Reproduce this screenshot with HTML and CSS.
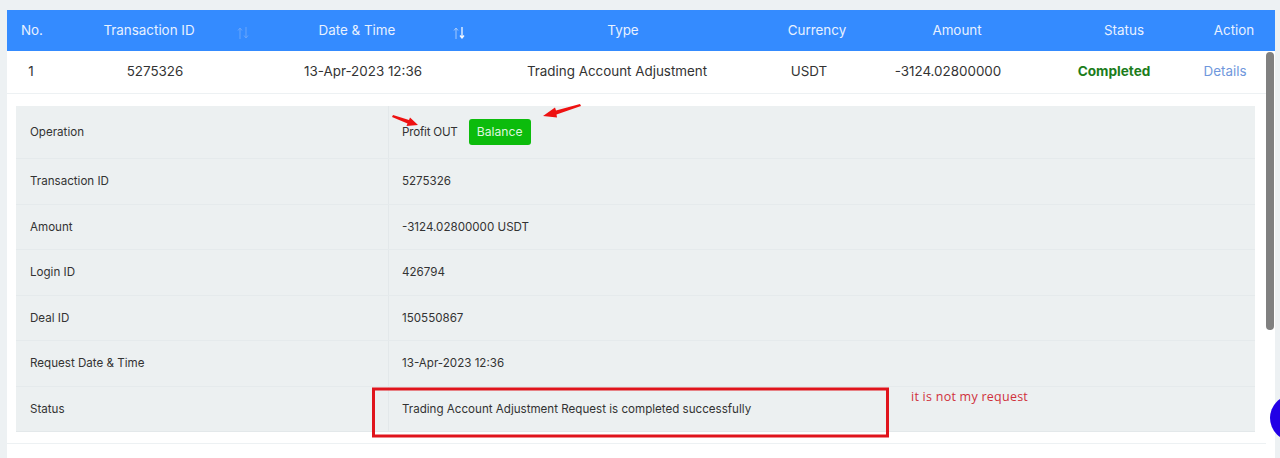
FILE: index.html
```html
<!DOCTYPE html>
<html lang="en">
<head>
<meta charset="utf-8">
<title>Transactions</title>
<link rel="stylesheet" href="styles.css">
</head>
<body>
<main class="card">
  <div class="head">
    <div class="no-left">No.</div>
    <div>Transaction ID</div>
    <div>Date &amp; Time</div>
    <div>Type</div>
    <div>Currency</div>
    <div>Amount</div>
    <div>Status</div>
    <div>Action</div>
    <svg class="sort sort-a" viewBox="0 0 12 12" width="12" height="12" aria-hidden="true">
      <path d="M3 12V1M1 3.5L3 1l2 2.5" class="dim"/>
      <path d="M9 0v11M7 8.5L9 11l2-2.5" class="dim"/>
    </svg>
    <svg class="sort sort-b" viewBox="0 0 12 12" width="12" height="12" aria-hidden="true">
      <path d="M3 12V1M1 3.5L3 1l2 2.5" class="mid"/>
      <path d="M9 0v11M7 8.5L9 11l2-2.5" class="lit"/>
    </svg>
  </div>
  <div class="row">
    <div>1</div>
    <div>5275326</div>
    <div>13-Apr-2023 12:36</div>
    <div>Trading Account Adjustment</div>
    <div>USDT</div>
    <div>-3124.02800000</div>
    <div class="done">Completed</div>
    <div class="link">Details</div>
  </div>
  <div class="wrap">
    <div class="details">
      <div class="item h53"><div class="k">Operation</div><div class="v"><span class="op">Profit OUT</span><span class="badge">Balance</span></div></div>
      <div class="item"><div class="k">Transaction ID</div><div class="v">5275326</div></div>
      <div class="item"><div class="k">Amount</div><div class="v">-3124.02800000 USDT</div></div>
      <div class="item"><div class="k">Login ID</div><div class="v">426794</div></div>
      <div class="item"><div class="k">Deal ID</div><div class="v">150550867</div></div>
      <div class="item"><div class="k">Request Date &amp; Time</div><div class="v">13-Apr-2023 12:36</div></div>
      <div class="item"><div class="k">Status</div><div class="v">Trading Account Adjustment Request is completed successfully</div></div>
    </div>
  </div>
</main>
<div class="scrollbar"></div>
<div class="chat"></div>
<svg class="marks" viewBox="0 0 1280 458" width="1280" height="458" aria-hidden="true">
  <g fill="#ee1111">
    <path d="M392 117 L393 115 L409 120 L410 117.5 L418 125 L406.5 126 L407.5 123.5 Z"/>
    <path d="M581 106 L580 104 L556 110.5 L555 107.5 L543 116 L557 117.5 L556.5 114.5 Z"/>
  </g>
  <rect x="373.5" y="389" width="514" height="47" fill="none" stroke="#e0141c" stroke-width="3"/>
</svg>
<div class="note">it is not my request</div>
</body>
</html>
```
FILE: styles.css
```css
* { box-sizing: border-box; }
html, body { margin: 0; height: 458px; overflow: hidden; }
body {
  position: relative;
  padding: 10px 5px 0 7px;
  background: #edf1f3;
  font-family: Inter, "Noto Sans", sans-serif;
  font-size: 13.4px;
  color: #333;
}
.card { background: #fff; height: 448px; }
.head, .row { display: grid; align-items: center; text-align: center; }
.head {
  position: relative;
  height: 41px;
  grid-template-columns: 48px 188px 228px 304px 84px 196px 138px 82px;
  background: #348bff;
  color: #e8f1ff;
  padding-bottom: 2px;
}
.no-left { padding-left: 2px; }
.sort { position: absolute; top: 17px; fill: none; stroke-width: 1; }
.sort-a { left: 230px; }
.sort-b { left: 446px; }
.dim { stroke: #69a6fb; }
.mid { stroke: #a5c9fb; }
.lit { stroke: #f2f7ff; stroke-width: 1.3; }
.row {
  height: 43px;
  width: 1259px;
  grid-template-columns: 48px 200px 216px 292px 92px 186px 146px 76px;
  border-bottom: 1px solid #edf1f3;
  padding-bottom: 3px;
}
.done { font-weight: 700; font-size: 13.6px; color: #1c7d1c; }
.link { color: #6f97dc; }
.wrap { width: 1259px; height: 350px; padding: 12px 11px 0 9px; border-bottom: 1px solid #edf1f3; }
.details { background: #ecf0f1; font-size: 11.6px; border-bottom: 1px solid #e3e8ea; }
.item { display: grid; grid-template-columns: 373px 1fr; height: 45.5px; border-bottom: 1px solid #e5eaec; }
.item:last-child { height: 44.5px; border-bottom: 0; }
.h53 { height: 53px; }
.k, .v { display: flex; align-items: center; }
.k { padding-left: 14px; border-right: 1px solid #e3e8ea; }
.v { padding-left: 13px; white-space: pre; }
.op { letter-spacing: -.2px; }
.badge {
  margin-left: 11px;
  padding: 0 8px;
  height: 26px;
  line-height: 26px;
  border-radius: 3px;
  background: #0cbc0c;
  color: #dff7df;
  font-size: 12.2px;
}
.scrollbar { position: absolute; left: 1266px; top: 52px; width: 8px; height: 278px; border-radius: 4px; background: #808080; }
.chat { position: absolute; left: 1270px; top: 395px; width: 46px; height: 46px; border-radius: 50%; background: #2200e6; }
.marks { position: absolute; left: 0; top: 0; }
.note { position: absolute; left: 911px; top: 388px; font: 12.5px "Open Sans", sans-serif; letter-spacing: .25px; color: #d0313c; }
```
